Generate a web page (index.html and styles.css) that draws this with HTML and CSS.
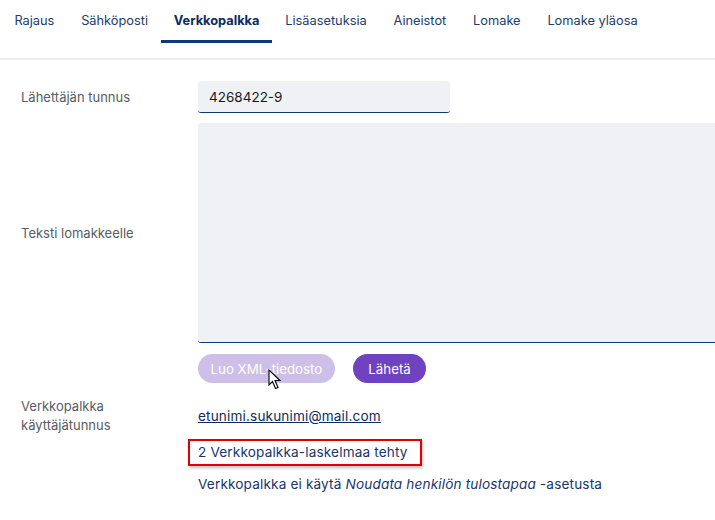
FILE: index.html
```html
<!DOCTYPE html>
<html lang="fi">
  <head>
    <meta charset="UTF-8" />
    <title>Verkkopalkka</title>
    <link rel="stylesheet" href="styles.css">
  </head>
  <body>
    <nav class="tabs">
      <a class="tab">Rajaus</a>
      <a class="tab">Sähköposti</a>
      <a class="tab active">Verkkopalkka</a>
      <a class="tab">Lisäasetuksia</a>
      <a class="tab">Aineistot</a>
      <a class="tab">Lomake</a>
      <a class="tab">Lomake yläosa</a>
    </nav>

    <main class="form">
      <div class="row row-sender">
        <label class="label">Lähettäjän tunnus</label>
        <input class="input" type="text" value="4268422-9" />
      </div>

      <div class="row row-text">
        <label class="label">Teksti lomakkeelle</label>
        <textarea class="textarea"></textarea>
      </div>

      <div class="row row-buttons">
        <div class="label"></div>
        <div class="buttons">
          <button class="btn btn-disabled">Luo XML-tiedosto</button>
          <button class="btn btn-primary">Lähetä</button>
          <svg class="pointer" width="14" height="21" viewBox="0 0 14 21">
            <path d="M1 1 L1 16 L4.5 12.5 L7.5 19.5 L10 18.5 L7 11.5 L12 11.5 Z" fill="#fff" stroke="#000" stroke-width="1.1" />
          </svg>
        </div>
      </div>

      <div class="row row-user">
        <label class="label">Verkkopalkka<br />käyttäjätunnus</label>
        <a class="value link" href="#">etunimi.sukunimi@mail.com</a>
      </div>

      <div class="row row-count">
        <div class="label"></div>
        <span class="value highlight">2 Verkkopalkka-laskelmaa tehty</span>
      </div>

      <div class="row row-note">
        <div class="label"></div>
        <div class="value">Verkkopalkka ei käytä <em>Noudata henkilön tulostapaa</em> -asetusta</div>
      </div>
    </main>
  </body>
</html>
```

FILE: styles.css
```css
* {
  box-sizing: border-box;
}
body {
  margin: 0;
  background: #fff;
  font-family: Inter, "Noto Sans", sans-serif;
  font-size: 13px;
  color: #17366b;
  overflow: hidden;
}
.tabs {
  display: flex;
  padding-left: 1px;
  height: 60px;
  border-bottom: 2px solid #eeeeee;
}
.tab {
  height: 43px;
  padding: 1px 13.4px 0;
  display: flex;
  align-items: center;
  color: #1d3d6c;
  font-size: 12.8px;
  border-bottom: 3px solid transparent;
}
.tab.active {
  padding: 1px 12.4px 0;
  font-weight: 700;
  color: #0d2b5c;
  border-bottom-color: #0d3a72;
}
.row {
  display: flex;
  align-items: center;
}
.row-sender {
  margin-top: 21px;
}
.row-text {
  margin-top: 10px;
}
.row-buttons {
  margin-top: 11px;
}
.row-user {
  margin-top: 14px;
}
.row-count {
  margin-top: 4px;
}
.row-note {
  margin-top: 9px;
}
.label {
  flex: 0 0 198px;
  padding-left: 21px;
  color: #575c63;
  line-height: 19px;
}
.value {
  font-size: 13.6px;
  letter-spacing: 0.15px;
  line-height: 19px;
}
.input {
  display: block;
  width: 252px;
  height: 32px;
  border: none;
  border-bottom: 1px solid #0d3a72;
  border-radius: 3px;
  background: #f0f1f5;
  padding: 0 11px;
  font-family: inherit;
  font-size: 13.5px;
  color: #1a1a1a;
  outline: none;
}
.textarea {
  display: block;
  flex: 0 0 530px;
  height: 220px;
  border: none;
  border-bottom: 1px solid #0d3a72;
  border-radius: 3px;
  background: #f0f1f5;
  resize: none;
  outline: none;
}
.buttons {
  position: relative;
  display: flex;
  gap: 18px;
}
.btn {
  height: 29px;
  border: none;
  border-radius: 15px;
  padding: 0 12.5px;
  font-family: inherit;
  font-size: 13.3px;
  color: #fff;
}
.btn-disabled {
  background: #cdbfe8;
}
.btn-primary {
  padding: 0 15.5px;
  background: #6f42c1;
}
.pointer {
  position: absolute;
  left: 70px;
  top: 15px;
}
.link {
  color: #0d2b5c;
  text-decoration: underline;
}
.highlight {
  margin-left: -10px;
  padding: 2px 12px 2px 8px;
  border: 2px solid #e10000;
  box-shadow: 1px 2px 3px rgba(0, 0, 0, 0.25);
  color: #17366b;
}
.value em {
  font-style: italic;
}
```
